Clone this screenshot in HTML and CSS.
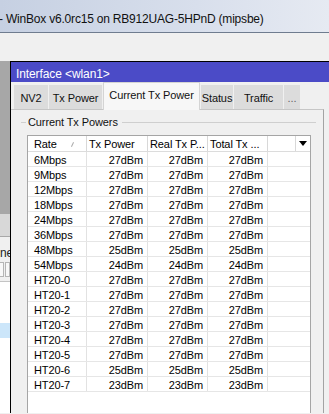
FILE: index.html
```html
<!DOCTYPE html>
<html lang="en">
<head>
    <meta charset="UTF-8">
    <title>WinBox - Interface wlan1</title>
    <link rel="stylesheet" href="styles.css">
</head>
<body>

    <!-- Thanh tiêu đề của WinBox -->
    <div class="titlebar">
        <span class="title-text">- WinBox v6.0rc15 on RB912UAG-5HPnD (mipsbe)</span>
    </div>

    <!-- Vùng thanh công cụ (trống) -->
    <div class="toolbar"></div>

    <div class="desk">
        <!-- Phần cửa sổ phía sau bị che, chỉ thấy mép trái -->
        <div class="side">
            <div class="side-mdi"></div>
            <div class="side-band"></div>
            <div class="side-form">
                <div class="side-label">ne</div>
                <div class="side-boxes"><span></span><span></span></div>
            </div>
            <div class="side-list"><div class="side-sel"></div></div>
        </div>

        <!-- Cửa sổ Interface -->
        <div class="window">
            <div class="win-title">Interface &lt;wlan1&gt;</div>

            <div class="tabs">
                <div class="tab tab-nv2">NV2</div>
                <div class="tab tab-txp">Tx Power</div>
                <div class="tab tab-cur active">Current Tx Power</div>
                <div class="tab tab-status">Status</div>
                <div class="tab tab-traffic">Traffic</div>
                <div class="tab tab-more">...</div>
            </div>

            <div class="panel">
                <div class="group"><span class="group-label">Current Tx Powers</span></div>

                <div class="grid">
                    <div class="row head">
                        <div class="cell c-rate">Rate<span class="sort"></span></div>
                        <div class="cell c-txt">Tx Power</div>
                        <div class="cell c-txt">Real Tx P...</div>
                        <div class="cell c-txt">Total Tx ...</div>
                        <div class="cell c-blank"></div>
                        <div class="cell c-drop"><span class="drop-arrow"></span></div>
                    </div>
                    <div id="rows"></div>
                </div>
            </div>
        </div>
    </div>

    <script>
        // Dữ liệu: tốc độ và công suất phát (dBm)
        const rates = [
            ["6Mbps", 27], ["9Mbps", 27], ["12Mbps", 27], ["18Mbps", 27],
            ["24Mbps", 27], ["36Mbps", 27], ["48Mbps", 25], ["54Mbps", 24],
            ["HT20-0", 27], ["HT20-1", 27], ["HT20-2", 27], ["HT20-3", 27],
            ["HT20-4", 27], ["HT20-5", 27], ["HT20-6", 25], ["HT20-7", 23]
        ];

        const rowsDiv = document.getElementById('rows');
        rates.forEach(([rate, dbm]) => {
            const row = document.createElement('div');
            row.className = 'row';
            row.innerHTML =
                `<div class="cell c-rate">${rate}</div>` +
                `<div class="cell c-num">${dbm}dBm</div>` +
                `<div class="cell c-num">${dbm}dBm</div>` +
                `<div class="cell c-num">${dbm}dBm</div>` +
                `<div class="cell c-rest"></div>`;
            rowsDiv.appendChild(row);
        });
    </script>

</body>
</html>
```

FILE: styles.css
```css
body {
    margin: 0;
    width: 329px;
    height: 414px;
    overflow: hidden;
    background: #f0f0f0;
    font-family: "Liberation Sans", Arial, sans-serif;
    font-size: 11px;
    letter-spacing: -0.1px;
    color: #000;
}

/* Thanh tiêu đề kiểu Windows 7 */
.titlebar {
    height: 33px;
    border-bottom: 1px solid #6f7c8f;
    background: linear-gradient(to right, #c6d0e2, #d8dfec 60%, #e6eaf2);
    display: flex;
    align-items: center;
    padding-top: 5px;
    box-sizing: border-box;
    white-space: nowrap;
    overflow: hidden;
}

.title-text {
    font-size: 12px;
    letter-spacing: -0.2px;
    margin-left: -1px;
    color: #111;
}

.toolbar {
    height: 28px;
    background: #f0f0f0;
}

.desk {
    display: flex;
    height: 352px;
}

/* Mép trái của cửa sổ phía sau */
.side {
    width: 10px;
    display: flex;
    flex-direction: column;
    overflow: hidden;
}

.side-mdi {
    height: 153px;
    background: #a7a7a7;
}

.side-band {
    height: 22px;
    background: #d8d8d8;
    border-bottom: 1px solid #a8a8a8;
}

.side-form {
    height: 45px;
    background: #f0f0f0;
    border-bottom: 1px solid #c4c4c4;
    box-sizing: border-box;
    padding-top: 8px;
}

.side-label {
    height: 17px;
    line-height: 17px;
    font-size: 12px;
    white-space: nowrap;
    color: #222;
}

.side-boxes {
    display: flex;
    gap: 1px;
    height: 15px;
}

.side-boxes span {
    width: 4px;
    border: 1px solid #b5b5b5;
    border-left: none;
    background: #f8f8f8;
}

.side-boxes span + span {
    width: 4px;
    border-left: 1px solid #b5b5b5;
}

.side-list {
    flex: 1;
    background: #fff;
    padding-top: 41px;
}

.side-sel {
    height: 15px;
    background: #cce6fa;
}

/* Cửa sổ Interface */
.window {
    flex: 1;
    border-left: 1px solid #000;
    border-top: 1px solid #000;
    overflow: hidden;
}

.win-title {
    height: 20px;
    line-height: 24px;
    overflow: hidden;
    background: #4b4bc7;
    color: #fff;
    padding-left: 5px;
    font-size: 12px;
}

.tabs {
    height: 27px;
    display: flex;
    align-items: flex-end;
    gap: 1px;
    padding-left: 3px;
    position: relative;
    z-index: 1;
}

.tab {
    height: 24px;
    padding-top: 3px;
    line-height: 21px;
    text-align: center;
    background: #dcdcdc;
    color: #111;
    box-sizing: border-box;
    white-space: nowrap;
}

.tab.active {
    height: 28px;
    margin-bottom: -1px;
    background: #f7f7f7;
    border: 1px solid #d4d4d4;
    border-bottom: none;
    padding-top: 2px;
}

.tab-nv2 { width: 34px; }
.tab-txp { width: 53px; }
.tab-cur { width: 97px; }
.tab-status { width: 32px; }
.tab-traffic { width: 49px; }
.tab-more { width: 16px; color: #666; }

.panel {
    width: 313px;
    height: 304px;
    box-sizing: border-box;
    border-top: 1px solid #c6c6c6;
    border-right: 1px solid #a3a3a3;
    padding-top: 6px;
    overflow: hidden;
}

/* Khung nhóm "Current Tx Powers" */
.group {
    display: flex;
    align-items: center;
    margin-left: 10px;
    width: 295px;
    height: 13px;
}

.group::before {
    content: "";
    width: 5px;
    border-top: 1px solid #cfcfcf;
}

.group::after {
    content: "";
    flex: 1;
    border-top: 1px solid #cfcfcf;
}

.group-label {
    padding: 0 4px 0 2px;
    line-height: 13px;
    color: #111;
}

/* Bảng dữ liệu */
.grid {
    margin: 6px 0 0 16px;
    width: 284px;
    height: 300px;
    box-sizing: border-box;
    border: 1px solid #a5a5a5;
    background: #fff;
}

.row {
    display: flex;
    height: 14px;
    border-bottom: 1px solid #e6e6e6;
}

.row.head {
    height: 15px;
    border-bottom: 1px solid #dcdcdc;
}

.cell {
    box-sizing: border-box;
    border-right: 1px solid #e2e2e2;
    line-height: 16px;
    white-space: nowrap;
}

.head .cell {
    border-right-color: #d8d8d8;
    line-height: 17px;
    overflow: hidden;
}

.c-rate {
    width: 59px;
    padding-left: 6px;
    position: relative;
}

.c-txt, .c-num {
    width: 61px;
    padding-left: 2px;
}

.c-txt + .c-txt, .c-num + .c-num {
    width: 60px;
}

.c-num {
    text-align: right;
    padding: 0 4px 0 0;
}

.c-rest {
    flex: 1;
    border-right: none;
}

.c-blank {
    width: 28px;
}

.c-drop {
    flex: 1;
    border-right: none;
    display: flex;
    justify-content: center;
    align-items: center;
}

.drop-arrow {
    width: 0;
    height: 0;
    border-left: 4px solid transparent;
    border-right: 4px solid transparent;
    border-top: 5px solid #000;
}

/* Dấu sắp xếp nhỏ trong cột Rate */
.sort {
    position: absolute;
    left: 44px;
    top: 6px;
    width: 1px;
    height: 5px;
    background: #aaa;
    transform: rotate(25deg);
}
```
